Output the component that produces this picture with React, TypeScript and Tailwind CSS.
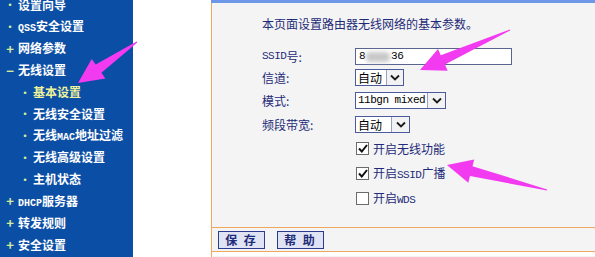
import React from 'react'

const navy = 'text-[#1e2b78]'
const mono = "font-['Liberation_Mono'] text-[11px] tracking-[-0.5px]"

interface NavItem {
  label: React.ReactNode
  mark: '•' | '+' | '−'
  sub?: boolean
  active?: boolean
}

const nav: NavItem[] = [
  { label: '设置向导', mark: '•' },
  { label: <><span className="font-['Liberation_Mono'] text-[10px]">QSS</span>安全设置</>, mark: '•' },
  { label: '网络参数', mark: '+' },
  { label: '无线设置', mark: '−' },
  { label: '基本设置', mark: '•', sub: true, active: true },
  { label: '无线安全设置', mark: '•', sub: true },
  { label: <>无线<span className="font-['Liberation_Mono'] text-[10px] font-bold">MAC</span>地址过滤</>, mark: '•', sub: true },
  { label: '无线高级设置', mark: '•', sub: true },
  { label: '主机状态', mark: '•', sub: true },
  { label: <><span className="font-['Liberation_Mono'] text-[10px] font-bold">DHCP</span>服务器</>, mark: '+' },
  { label: '转发规则', mark: '+' },
  { label: '安全设置', mark: '+' },
]

function arrow(tail: [number, number], tip: [number, number]) {
  const dx = tip[0] - tail[0]
  const dy = tip[1] - tail[1]
  const len = Math.hypot(dx, dy)
  const ux = dx / len
  const uy = dy / len
  const nx = -uy
  const ny = ux
  const headLen = 25
  const headW = 12
  const shaftW = 5
  const bx = tip[0] - ux * headLen
  const by = tip[1] - uy * headLen
  const pts = [
    [tail[0] + nx * 0.6, tail[1] + ny * 0.6],
    [bx + nx * shaftW, by + ny * shaftW],
    [bx + nx * headW, by + ny * headW],
    tip,
    [bx - nx * headW, by - ny * headW],
    [bx - nx * shaftW, by - ny * shaftW],
    [tail[0] - nx * 0.6, tail[1] - ny * 0.6],
  ]
  return pts.map((p) => `${p[0].toFixed(1)},${p[1].toFixed(1)}`).join(' ')
}

function Chevron() {
  return (
    <svg width="10" height="7" viewBox="0 0 10 7">
      <path d="M1 1.5 L5 5.5 L9 1.5" fill="none" stroke="#1a1a1a" strokeWidth="1.8" />
    </svg>
  )
}

function Select({ text, width, textW }: { text: React.ReactNode; width: string; textW: string }) {
  return (
    <div className={`flex h-[17px] items-stretch border border-[#4b5a9c] bg-white ${width}`}>
      <div className={`flex items-center pl-[2px] text-[12px] text-black ${textW}`}>{text}</div>
      <div className="flex flex-1 items-center justify-center border-l border-[#9aa2c4] bg-[#f2f2f2]">
        <Chevron />
      </div>
    </div>
  )
}

function Check({ checked, children }: { checked: boolean; children: React.ReactNode }) {
  return (
    <div className="flex h-[25px] items-center">
      <div className="flex h-[13px] w-[13px] items-center justify-center border border-[#6b6b6b] bg-white">
        {checked && (
          <svg width="10" height="9" viewBox="0 0 10 9">
            <path d="M1 4.5 L3.8 7.5 L9 1" fill="none" stroke="#111" strokeWidth="2" />
          </svg>
        )}
      </div>
      <span className={`ml-[4px] text-[12px] ${navy}`}>{children}</span>
    </div>
  )
}

export default function App() {
  return (
    <div className="relative flex h-[257px] w-[595px] overflow-hidden bg-white font-['Noto_Sans_CJK_SC',sans-serif]">
      <div className="w-[133px] shrink-0 bg-[#0b4ea5]">
        <div className="-mt-[6px]">
          {nav.map((n, i) => (
            <div key={i} className={`flex h-[21.8px] items-center text-[12px] font-bold ${n.sub ? 'pl-[20px]' : 'pl-[5px]'}`}>
              <span className={`w-[10px] text-center text-[#d6eb9c] ${n.mark === '•' ? 'text-[10px]' : 'text-[13px]'}`}>{n.mark}</span>
              <span className={`ml-[3px] ${n.active ? 'text-[#eef29a]' : 'text-white'}`}>{n.label}</span>
            </div>
          ))}
        </div>
      </div>
      <div className="w-[78px] shrink-0" />
      <div className="flex flex-1 flex-col">
        <div className="h-[3px] bg-[#6f97e8]" />
        <div className="flex flex-1 flex-col border-l border-[#f0a860] bg-[#f4f4f4]">
          <div className="h-[224px] pl-[50px]">
            <div className={`pt-[12px] text-[12px] ${navy}`}>本页面设置路由器无线网络的基本参数。</div>
            <div className="mt-[15px] grid grid-cols-[93px_1fr] gap-y-[4px] text-[12px]">
              <div className={`flex h-[17px] items-center ${navy}`}><span className={mono}>SSID</span>号:</div>
              <div className="flex h-[17px] w-[157px] items-center border border-[#59648f] bg-white pl-[3px] text-black">
                <span className={mono}>8</span>
                <span className="mx-[1px] h-[10px] w-[24px] rounded-sm bg-[#c8c8c8] blur-[2px]" />
                <span className={mono}>36</span>
              </div>
              <div className={`flex h-[17px] items-center ${navy}`}>信道:</div>
              <Select text="自动" width="w-[49px]" textW="w-[30px]" />
              <div className={`mt-[2px] flex h-[17px] items-center ${navy}`}>模式:</div>
              <div className="mt-[2px]">
                <Select text={<span className={mono}>11bgn mixed</span>} width="w-[91px]" textW="w-[71px]" />
              </div>
              <div className={`mt-[3px] flex h-[18px] items-center ${navy}`}>频段带宽:</div>
              <div className="mt-[3px]">
                <Select text="自动" width="w-[55px]" textW="w-[35px]" />
              </div>
            </div>
            <div className="ml-[94px] mt-[2px]">
              <Check checked>开启无线功能</Check>
              <Check checked>开启<span className={mono}>SSID</span>广播</Check>
              <Check checked={false}>开启<span className={mono}>WDS</span></Check>
            </div>
          </div>
          <div className="flex h-[25px] items-center gap-[12px] border-y border-[#f0a860] pl-[6px]">
            {['保 存', '帮 助'].map((b) => (
              <div key={b} className="flex h-[18px] w-[47px] items-center justify-center border border-[#2c3c8c] bg-[#dfe3f3] text-[12px] font-bold tracking-[2px] text-[#1e2b78]">
                {b}
              </div>
            ))}
          </div>
          <div className="h-[4px] bg-white" />
        </div>
      </div>
      <svg className="pointer-events-none absolute left-0 top-0" width="595" height="257">
        <polygon points={arrow([137, 42], [78, 83])} fill="#f23af0" />
        <polygon points={arrow([510, 30], [420, 70])} fill="#f23af0" />
        <polygon points={arrow([547, 190], [447, 165])} fill="#f23af0" />
      </svg>
    </div>
  )
}
